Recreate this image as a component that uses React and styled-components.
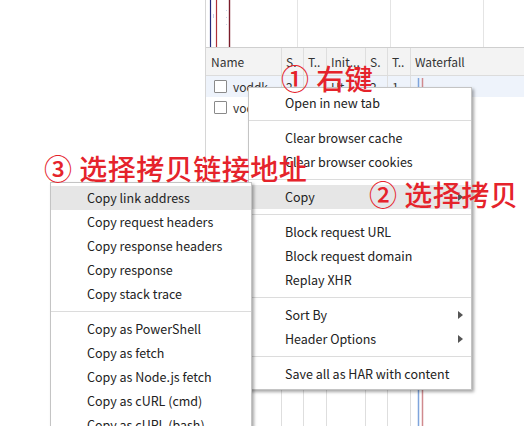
import styled, { createGlobalStyle } from "styled-components";

const GlobalStyle = createGlobalStyle`
    html, body {
        margin: 0;
        padding: 0;
        background: #fff;
    }
    body {
        font-family: "Noto Sans CJK SC", "Noto Sans", sans-serif;
        color: #222;
    }
`

const Page = styled.div`
    position: relative;
    display: flex;
    width: 524px;
    height: 426px;
    overflow: hidden;
    background: #fff;
`
const Blank = styled.div`
    width: 205px;
    flex: none;
`
const Panel = styled.div`
    flex: 1;
    display: flex;
    flex-direction: column;
    border-left: 1px solid #d6d6d6;
    font-size: 12px;
    color: #333;
`
const Overview = styled.svg`
    display: block;
    flex: none;
    width: 100%;
    height: 47px;
    border-bottom: 1px solid #cfcfcf;
`
const COLS = "76px 22px 23px 39px 22px 23px 1fr";

const HeaderRow = styled.div`
    display: grid;
    grid-template-columns: ${COLS};
    height: 27px;
    background: #f3f3f3;
    border-bottom: 1px solid #dcdcdc;
`
const Body = styled.div`
    position: relative;
    flex: 1;
    display: flex;
    flex-direction: column;
`
const Row = styled.div`
    display: grid;
    grid-template-columns: ${COLS};
    height: 21px;
    background: ${props => props.selected ? '#eef3fb' : '#fff'};
`
const Filler = styled.div`
    flex: 1;
    display: grid;
    grid-template-columns: ${COLS};
`
const Cell = styled.div`
    display: flex;
    align-items: center;
    gap: 6px;
    padding-left: ${props => props.first ? '5px' : '4px'};
    border-right: ${props => props.last ? 'none' : '1px solid #dedede'};
    white-space: nowrap;
    overflow: hidden;
`
const Check = styled.span`
    width: 11px;
    height: 11px;
    flex: none;
    margin-left: 3px;
    border: 1px solid #8a8a8a;
    border-radius: 1px;
    background: #fff;
`
const Marks = styled.svg`
    position: absolute;
    left: 0;
    top: 0;
    width: 100%;
    height: 100%;
    pointer-events: none;
`

const Menu = styled.div`
    position: absolute;
    left: ${props => props.x}px;
    top: ${props => props.y}px;
    width: ${props => props.w}px;
    box-sizing: border-box;
    padding: 3px 0;
    background: #fff;
    border: 1px solid #c4c4c4;
    box-shadow: 2px 2px 3px rgba(0, 0, 0, 0.35);
    font-size: 12.5px;
    color: #222;
    z-index: ${props => props.z || 1};
`
const Item = styled.div`
    position: relative;
    display: flex;
    align-items: center;
    box-sizing: border-box;
    height: 24px;
    padding: 0 0 2px 36px;
    background: ${props => props.active ? '#e6e6e6' : 'transparent'};
    white-space: nowrap;
`
const Arrow = styled.span`
    position: absolute;
    right: 8px;
    top: 8px;
    width: 0;
    height: 0;
    border-top: 4px solid transparent;
    border-bottom: 4px solid transparent;
    border-left: 5px solid #555;
`
const Sep = styled.div`
    height: 1px;
    margin: 5px 0;
    background: #dcdcdc;
`
const Note = styled.div`
    position: absolute;
    left: ${props => props.x}px;
    top: ${props => props.y}px;
    font-family: "Noto Sans CJK SC", sans-serif;
    font-size: 28px;
    font-weight: 500;
    letter-spacing: 0.5px;
    line-height: 1;
    color: #e5232b;
    white-space: nowrap;
    z-index: 5;
`

const headers = ["Name", "S.", "T..", "Init...", "S.", "T..", "Waterfall"];

const App = () => {
  return (
      <Page>
          <GlobalStyle/>
          <Blank/>
          <Panel>
              <Overview viewBox="0 0 318 47" preserveAspectRatio="none">
                  <line x1="91.5" y1="0" x2="91.5" y2="47" stroke="#e4e4e4"/>
                  <line x1="184.5" y1="0" x2="184.5" y2="47" stroke="#e4e4e4"/>
                  <line x1="277.5" y1="0" x2="277.5" y2="47" stroke="#e4e4e4"/>
                  <line x1="4.5" y1="0" x2="4.5" y2="47" stroke="#25287a" strokeWidth="1.2"/>
                  <line x1="10.5" y1="0" x2="10.5" y2="47" stroke="#b03038" strokeWidth="1.2"/>
                  <line x1="23.5" y1="0" x2="23.5" y2="47" stroke="#7a1c2a" strokeWidth="1.4"/>
                  <line x1="7.5" y1="14" x2="7.5" y2="18" stroke="#c8cce8"/>
                  <line x1="20.5" y1="10" x2="20.5" y2="28" stroke="#c8d4e8" strokeDasharray="1 6"/>
              </Overview>
              <HeaderRow>
                  {headers.map((h, i) => (
                      <Cell key={i} first={i === 0} last={i === headers.length - 1}>{h}</Cell>
                  ))}
              </HeaderRow>
              <Body>
                  <Row selected>
                      <Cell first><Check/>voddk...</Cell>
                      <Cell>2..</Cell>
                      <Cell>..</Cell>
                      <Cell>Ht...</Cell>
                      <Cell>2.</Cell>
                      <Cell>1</Cell>
                      <Cell last/>
                  </Row>
                  <Row>
                      <Cell first><Check/>vod...</Cell>
                      <Cell/>
                      <Cell/>
                      <Cell/>
                      <Cell/>
                      <Cell/>
                      <Cell last/>
                  </Row>
                  <Filler>
                      <Cell/><Cell/><Cell/><Cell/><Cell/><Cell/><Cell last/>
                  </Filler>
                  <Marks>
                      <line x1="212.5" y1="2" x2="212.5" y2="400" stroke="#7ea4dc" strokeWidth="1.5"/>
                      <line x1="216.5" y1="2" x2="216.5" y2="400" stroke="#d08a8e" strokeWidth="1.5"/>
                  </Marks>
              </Body>
          </Panel>

          <Menu x={248} y={87} w={224} z={2}>
              <Item>Open in new tab</Item>
              <Sep/>
              <Item>Clear browser cache</Item>
              <Item>Clear browser cookies</Item>
              <Sep/>
              <Item active>Copy<Arrow/></Item>
              <Sep/>
              <Item>Block request URL</Item>
              <Item>Block request domain</Item>
              <Item>Replay XHR</Item>
              <Sep/>
              <Item>Sort By<Arrow/></Item>
              <Item>Header Options<Arrow/></Item>
              <Sep/>
              <Item>Save all as HAR with content</Item>
          </Menu>

          <Menu x={50} y={182} w={202} z={3}>
              <Item active>Copy link address</Item>
              <Item>Copy request headers</Item>
              <Item>Copy response headers</Item>
              <Item>Copy response</Item>
              <Item>Copy stack trace</Item>
              <Sep/>
              <Item>Copy as PowerShell</Item>
              <Item>Copy as fetch</Item>
              <Item>Copy as Node.js fetch</Item>
              <Item>Copy as cURL (cmd)</Item>
              <Item>Copy as cURL (bash)</Item>
          </Menu>

          <Note x={281} y={64}>① 右键</Note>
          <Note x={369} y={180}>② 选择拷贝</Note>
          <Note x={44} y={154}>③ 选择拷贝链接地址</Note>
      </Page>
  );
};

export default App;
